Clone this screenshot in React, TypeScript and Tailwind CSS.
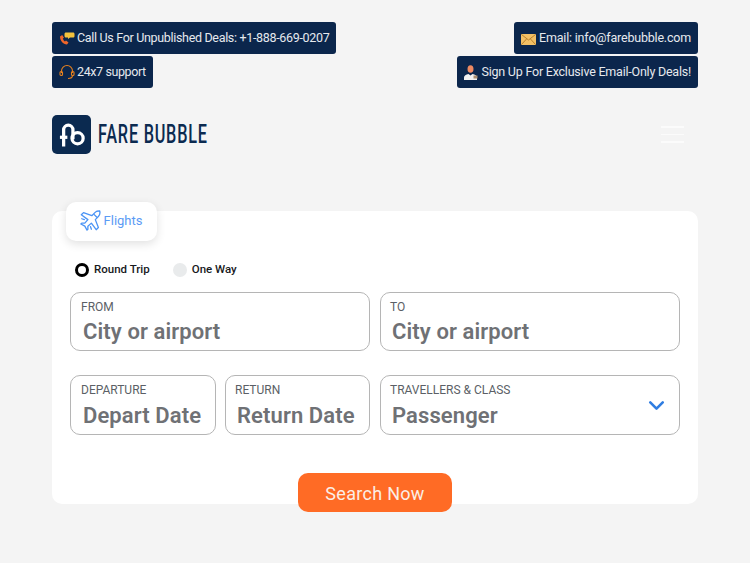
import React from "react";
import { ChevronDown } from "lucide-react";

const barlow = "font-['Roboto',sans-serif]";

const Badge = ({ icon, tracking, children }: { icon: React.ReactNode; tracking: string; children: React.ReactNode }) => (
  <div className={`flex h-8 items-center gap-[2px] rounded-[3px] bg-[#0b264c] px-[7px] text-[12.5px] text-[#e6e9ee] whitespace-nowrap ${tracking}`}>
    {icon}
    <span>{children}</span>
  </div>
);

const PhoneIcon = () => (
  <svg width="16" height="15" viewBox="0 0 16 14">
    <path d="M1 5c0 4 3 8 7 8l1.500-2-2.500-2-1 1c-1-.6-1.900-2-2.200-3l1.200-.8L3.200 3.500z" fill="#f0662a" />
    <path d="M7 1h7c1 0 1.500.6 1.500 1.500v2c0 1-.6 1.500-1.500 1.500h-3l-2 1.500V6H7c-1 0-1.500-.6-1.500-1.500v-2C5.500 1.600 6 1 7 1z" fill="#f4c23d" />
  </svg>
);

const HeadsetIcon = () => (
  <svg width="16" height="16" viewBox="0 0 16 16" fill="none" stroke="#e8821e" strokeWidth="1.100">
    <path d="M2.500 9V7a5.500 5.500 0 0 1 11 0v2" />
    <rect x="1" y="7.500" width="2.500" height="4" rx="1" />
    <rect x="12.500" y="7.500" width="2.500" height="4" rx="1" />
    <path d="M13.500 11.500c0 2-2 3-4.500 3" />
  </svg>
);

const MailIcon = () => (
  <svg width="15" height="11" viewBox="0 0 15 11" className="mr-[1px] mt-[2px]">
    <rect width="15" height="11" rx="1" fill="#f3c065" />
    <path d="M.5.500l7 5.500 7-5.500M.5 10.500l5-5.500M14.500 10.500l-5-5.500" fill="none" stroke="#b9812c" strokeWidth="1" />
  </svg>
);

const PersonIcon = () => (
  <svg width="14" height="15" viewBox="0 0 14 15" className="mr-[1px]">
    <ellipse cx="6.500" cy="4" rx="3" ry="3.800" fill="#ee8a62" />
    <path d="M0 15v-2.500C0 10.500 2 9.500 4.500 9l2 1.500L8.500 9c2.500.5 4.500 1.500 4.500 3.500V15z" fill="#f1f1f1" />
    <rect x="9.500" y="10.500" width="4" height="3" fill="#a98d70" />
  </svg>
);

const PlaneIcon = () => (
  <svg width="21" height="21" viewBox="0 0 24 24" fill="none" stroke="#4b94f5" strokeWidth="1.500" strokeLinejoin="round" strokeLinecap="round">
    <path d="M22.500 1.500c-1.500-.6-4 0-5.500 1.500L13.500 6.500 4 3 1.500 5.500 9 11l-3.500 4H2L1 16l4.500 2.500L8 23l1-1v-3.500l4-3.500 5.500 7.500 2.500-2.500-3.500-9 3.500-3.500c1.500-1.500 2-4.500 1.500-6.500z" />
    <path d="M16 5l3 3M2 10l3 1M13 22l-1-3" />
  </svg>
);

const Field = ({ label, value, className }: { label: string; value: string; className: string }) => (
  <div className={`flex flex-col rounded-[10px] border border-[#b5b5b5] bg-white ${className}`}>
    <div className="mt-[7px] text-[12px] leading-[14px] text-[#5b5f66]">{label}</div>
    <div className="mt-auto mb-[4px] ml-[2px] text-[22px] leading-[28px] tracking-[0.1px] font-semibold text-[#6f7175] whitespace-nowrap">{value}</div>
  </div>
);

export default function App() {
  return (
    <div className={`min-h-screen bg-[#f4f4f4] px-[52px] pt-[22px] ${barlow}`}>
      {/* Top contact badges */}
      <div className="flex justify-between">
        <div className="flex flex-col items-start gap-[2px]">
          <Badge icon={<PhoneIcon />} tracking="tracking-[-0.32px]">Call Us For Unpublished Deals: +1-888-669-0207</Badge>
          <Badge icon={<HeadsetIcon />} tracking="tracking-[-0.4px]">24x7 support</Badge>
        </div>
        <div className="flex flex-col items-end gap-[2px]">
          <Badge icon={<MailIcon />} tracking="tracking-[-0.2px]">Email: info@farebubble.com</Badge>
          <Badge icon={<PersonIcon />} tracking="tracking-[-0.22px]">Sign Up For Exclusive Email-Only Deals!</Badge>
        </div>
      </div>

      {/* Logo and menu */}
      <div className="mt-[27px] flex items-center justify-between">
        <div className="flex items-center gap-[7px]">
          <div className="flex h-[39px] w-[39px] items-center justify-center rounded-[5px] bg-[#0b2a50]">
            <svg width="26" height="25" viewBox="0 0 28 26" fill="none" stroke="#fff" strokeWidth="3.500">
              <path d="M5 26V8a5 5 0 0 1 10 0v10" />
              <circle cx="20" cy="17" r="6" />
              <path d="M1 16h8" />
            </svg>
          </div>
          <span className="origin-left scale-x-[0.65] text-[25px] font-medium tracking-[1.2px] text-[#0b2a50] whitespace-nowrap">
            FARE BUBBLE
          </span>
        </div>
        <div className="mr-[14px] flex w-[23px] flex-col gap-[6px]">
          <div className="h-[1.5px] bg-[#fbfbfb]" />
          <div className="h-[1.5px] bg-[#fbfbfb]" />
          <div className="h-[1.5px] bg-[#fbfbfb]" />
        </div>
      </div>

      {/* Search card */}
      <div className="mt-[57px] flow-root h-[293px] rounded-[10px] bg-white px-[18px]">
        <div className="-mt-[9px] -ml-[4px] flex h-[39px] w-[91px] items-center justify-center gap-[3px] rounded-[10px] bg-white pb-[2px] pr-[1px] shadow-[0_3px_10px_rgba(0,0,0,0.12)]">
          <PlaneIcon />
          <span className="text-[13px] text-[#5b9bf5]">Flights</span>
        </div>

        <div className="mt-[20px] ml-[5px] flex h-[18px] items-center text-[11.5px] font-medium text-[#17191c]">
          <span className="h-[14px] w-[14px] rounded-full border-[3px] border-black bg-white" />
          <span className="ml-[5px]">Round Trip</span>
          <span className="ml-[23px] h-[14px] w-[14px] rounded-full bg-[#e9ebec]" />
          <span className="ml-[5px]">One Way</span>
        </div>

        <div className="mt-[13px] flex gap-[10px]">
          <Field label="FROM" value="City or airport" className="h-[59px] w-[300px] pl-[10px]" />
          <Field label="TO" value="City or airport" className="h-[59px] w-[300px] pl-[9px]" />
        </div>

        <div className="mt-[24px] flex gap-[10px]">
          <div className="flex w-[300px] gap-[9px]">
            <Field label="DEPARTURE" value="Depart Date" className="h-[60px] w-[146px] pl-[10px]" />
            <Field label="RETURN" value="Return Date" className="h-[60px] w-[145px] pl-[9px]" />
          </div>
          <div className="relative w-[300px]">
            <Field label="TRAVELLERS & CLASS" value="Passenger" className="h-[60px] w-full pl-[9px]" />
            <ChevronDown className="absolute right-[11px] top-[18px] h-[25px] w-[25px] text-[#2f7de1]" strokeWidth={2.5} />
          </div>
        </div>

        <div className="mt-[38px] flex justify-center">
          <button className="h-[39px] w-[154px] rounded-[10px] bg-[#ff6b25] pt-[1px] text-[18px] tracking-[0.3px] text-[#fbeee6]">
            Search Now
          </button>
        </div>
      </div>
    </div>
  );
}
